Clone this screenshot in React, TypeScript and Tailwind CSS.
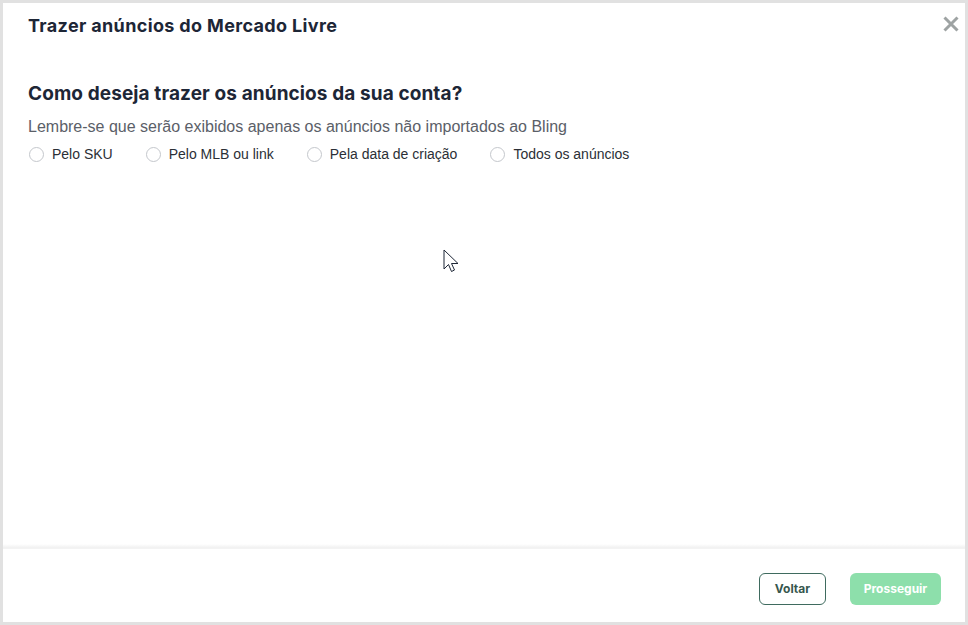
import React from "react";

function Radio({ label }: { label: string }) {
  return (
    <label className="flex items-center gap-[8px] cursor-pointer">
      <span className="w-[15px] h-[15px] rounded-full border border-[#c4c7cc] bg-white box-border" />
      <span className="text-[14px] text-[#2b2f36]" style={{ fontFamily: '"Liberation Sans", Arial, sans-serif' }}>
        {label}
      </span>
    </label>
  );
}

export default function App() {
  return (
    <div className="w-[968px] h-[625px] bg-[#e1e1e1] pt-[3px] pl-[3px] pr-[3px] pb-[3px] box-border">
      <div className="relative w-full h-full bg-white flex flex-col">
        {/* Header */}
        <div className="flex items-start justify-between pl-[25px] pr-[5px] pt-[12px]">
          <h1
            className="text-[18px] font-bold text-[#1d2636] leading-[22px] tracking-[0.35px]"
            style={{ fontFamily: 'Inter, "Noto Sans", sans-serif' }}
          >
            Trazer anúncios do Mercado Livre
          </h1>
          <button className="w-[18px] h-[18px] flex items-center justify-center text-[#9ea3a3]">
            <svg width="16" height="16" viewBox="0 0 16 16">
              <path d="M1.5 1.5 L14.5 14.5 M14.5 1.5 L1.5 14.5" stroke="#9ea3a3" strokeWidth="3" strokeLinecap="butt" />
            </svg>
          </button>
        </div>

        {/* Body */}
        <div className="flex-1 pl-[25px] pt-[45px]">
          <h2
            className="text-[19px] font-bold text-[#1d2636] leading-[24px] tracking-[0.1px]"
            style={{ fontFamily: 'Inter, "Noto Sans", sans-serif' }}
          >
            Como deseja trazer os anúncios da sua conta?
          </h2>
          <p
            className="mt-[11px] text-[16px] text-[#5b6068] leading-[20px]"
            style={{ fontFamily: '"Liberation Sans", Arial, sans-serif' }}
          >
            Lembre-se que serão exibidos apenas os anúncios não importados ao Bling
          </p>
          <div className="mt-[7px] flex items-center gap-[33px] pl-[1px]">
            <Radio label="Pelo SKU" />
            <Radio label="Pelo MLB ou link" />
            <Radio label="Pela data de criação" />
            <Radio label="Todos os anúncios" />
          </div>
        </div>

        {/* Footer */}
        <div className="h-[4px] bg-gradient-to-b from-white to-[#f0f0f0]" />
        <div className="h-[74px] flex items-start justify-end gap-[24px] pr-[24px] pt-[24px] border-t border-[#f3f3f3]">
          <button
            className="h-[32px] w-[67px] rounded-[6px] border border-[#3f6b5f] text-[12px] font-bold text-[#37574e] bg-white"
            style={{ fontFamily: 'Inter, "Noto Sans", sans-serif' }}
          >
            Voltar
          </button>
          <button
            className="h-[32px] w-[91px] rounded-[6px] bg-[#8ddfab] text-[12px] font-bold text-white"
            style={{ fontFamily: 'Inter, "Noto Sans", sans-serif' }}
          >
            Prosseguir
          </button>
        </div>

        {/* Cursor */}
        <svg className="absolute left-[440px] top-[246px]" width="20" height="28" viewBox="0 0 20 28">
          <path
            d="M1 1 L1 20 L5.5 15.5 L8.5 22.5 L11.5 21 L8.5 14.5 L15 14.5 Z"
            fill="white"
            stroke="#1d2636"
            strokeWidth="1"
            strokeLinejoin="miter"
          />
        </svg>
      </div>
    </div>
  );
}
